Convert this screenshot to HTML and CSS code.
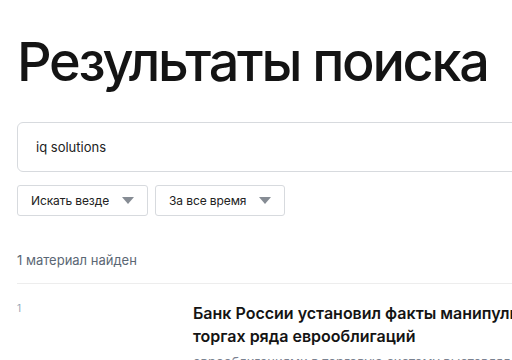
FILE: index.html
```html
<!DOCTYPE html>
<html lang="ru">
<head>
  <meta charset="UTF-8">
  <meta name="viewport" content="width=device-width, initial-scale=1.0">
  <title>Результаты поиска</title>
  <link rel="stylesheet" href="styles.css">
</head>
<body>

<div class="page">
  <h1 class="title">Результаты поиска</h1>

  <!-- Search field -->
  <form class="search">
    <input class="search-input" type="text" value="iq solutions">
  </form>

  <div class="filters">
    <div class="select">Искать везде <span class="arrow"></span></div>
    <div class="select">За все время <span class="arrow"></span></div>
  </div>

  <p class="count">1 материал найден</p>

  <div class="results">
    <div class="result">
      <div class="result-num">1</div>
      <div class="result-body">
        <h3 class="result-title">Банк России установил факты манипулирования ценами на торгах ряда еврооблигаций</h3>
        <p class="result-text">еврооблигациями в торговую систему выставлял заявки и заключал сделки</p>
      </div>
    </div>
  </div>
</div>

</body>
</html>
```

FILE: styles.css
```css
body {
  font-family: Inter, "Noto Sans", sans-serif;
  background-color: #ffffff;
  margin: 0;
  color: #1a1a1a;
  overflow: hidden;
}
.page {
  width: 760px;
  padding: 0 0 0 17px;
}
.title {
  font-size: 54px;
  font-weight: 500;
  letter-spacing: -2.3px;
  line-height: 1;
  margin: 35px 0 0 0;
  color: #141414;
}
.search {
  margin: 33px 0 0 0;
}
.search-input {
  display: block;
  width: 100%;
  height: 50px;
  box-sizing: border-box;
  border: 1px solid #d7dade;
  border-radius: 6px;
  padding: 0 18px;
  font-family: inherit;
  font-size: 13px;
  color: #222;
  outline: none;
}
.filters {
  display: flex;
  gap: 7px;
  margin-top: 13px;
}
.select {
  display: flex;
  align-items: center;
  height: 31px;
  box-sizing: border-box;
  border: 1px solid #d7dade;
  border-radius: 3px;
  padding: 0 13px 0 13px;
  font-size: 12px;
  letter-spacing: -0.1px;
  color: #222;
}
.arrow {
  width: 0;
  height: 0;
  border-left: 6px solid transparent;
  border-right: 6px solid transparent;
  border-top: 7px solid #868c94;
  margin-left: 13px;
}
.count {
  font-size: 13px;
  color: #5b6775;
  margin: 36px 0 0 0;
}
.results {
  border-top: 1px solid #ededed;
  margin-top: 15px;
}
.result {
  display: grid;
  grid-template-columns: 176px 1fr;
  padding-top: 18px;
}
.result-num {
  font-size: 10px;
  color: #94a4b6;
}
.result-body {
  width: 500px;
}
.result-title {
  font-size: 16px;
  font-weight: 600;
  line-height: 23px;
  margin: 0;
  color: #141414;
}
.result-text {
  font-size: 13px;
  color: #7a8290;
  margin: 6px 0 0 0;
}
```
